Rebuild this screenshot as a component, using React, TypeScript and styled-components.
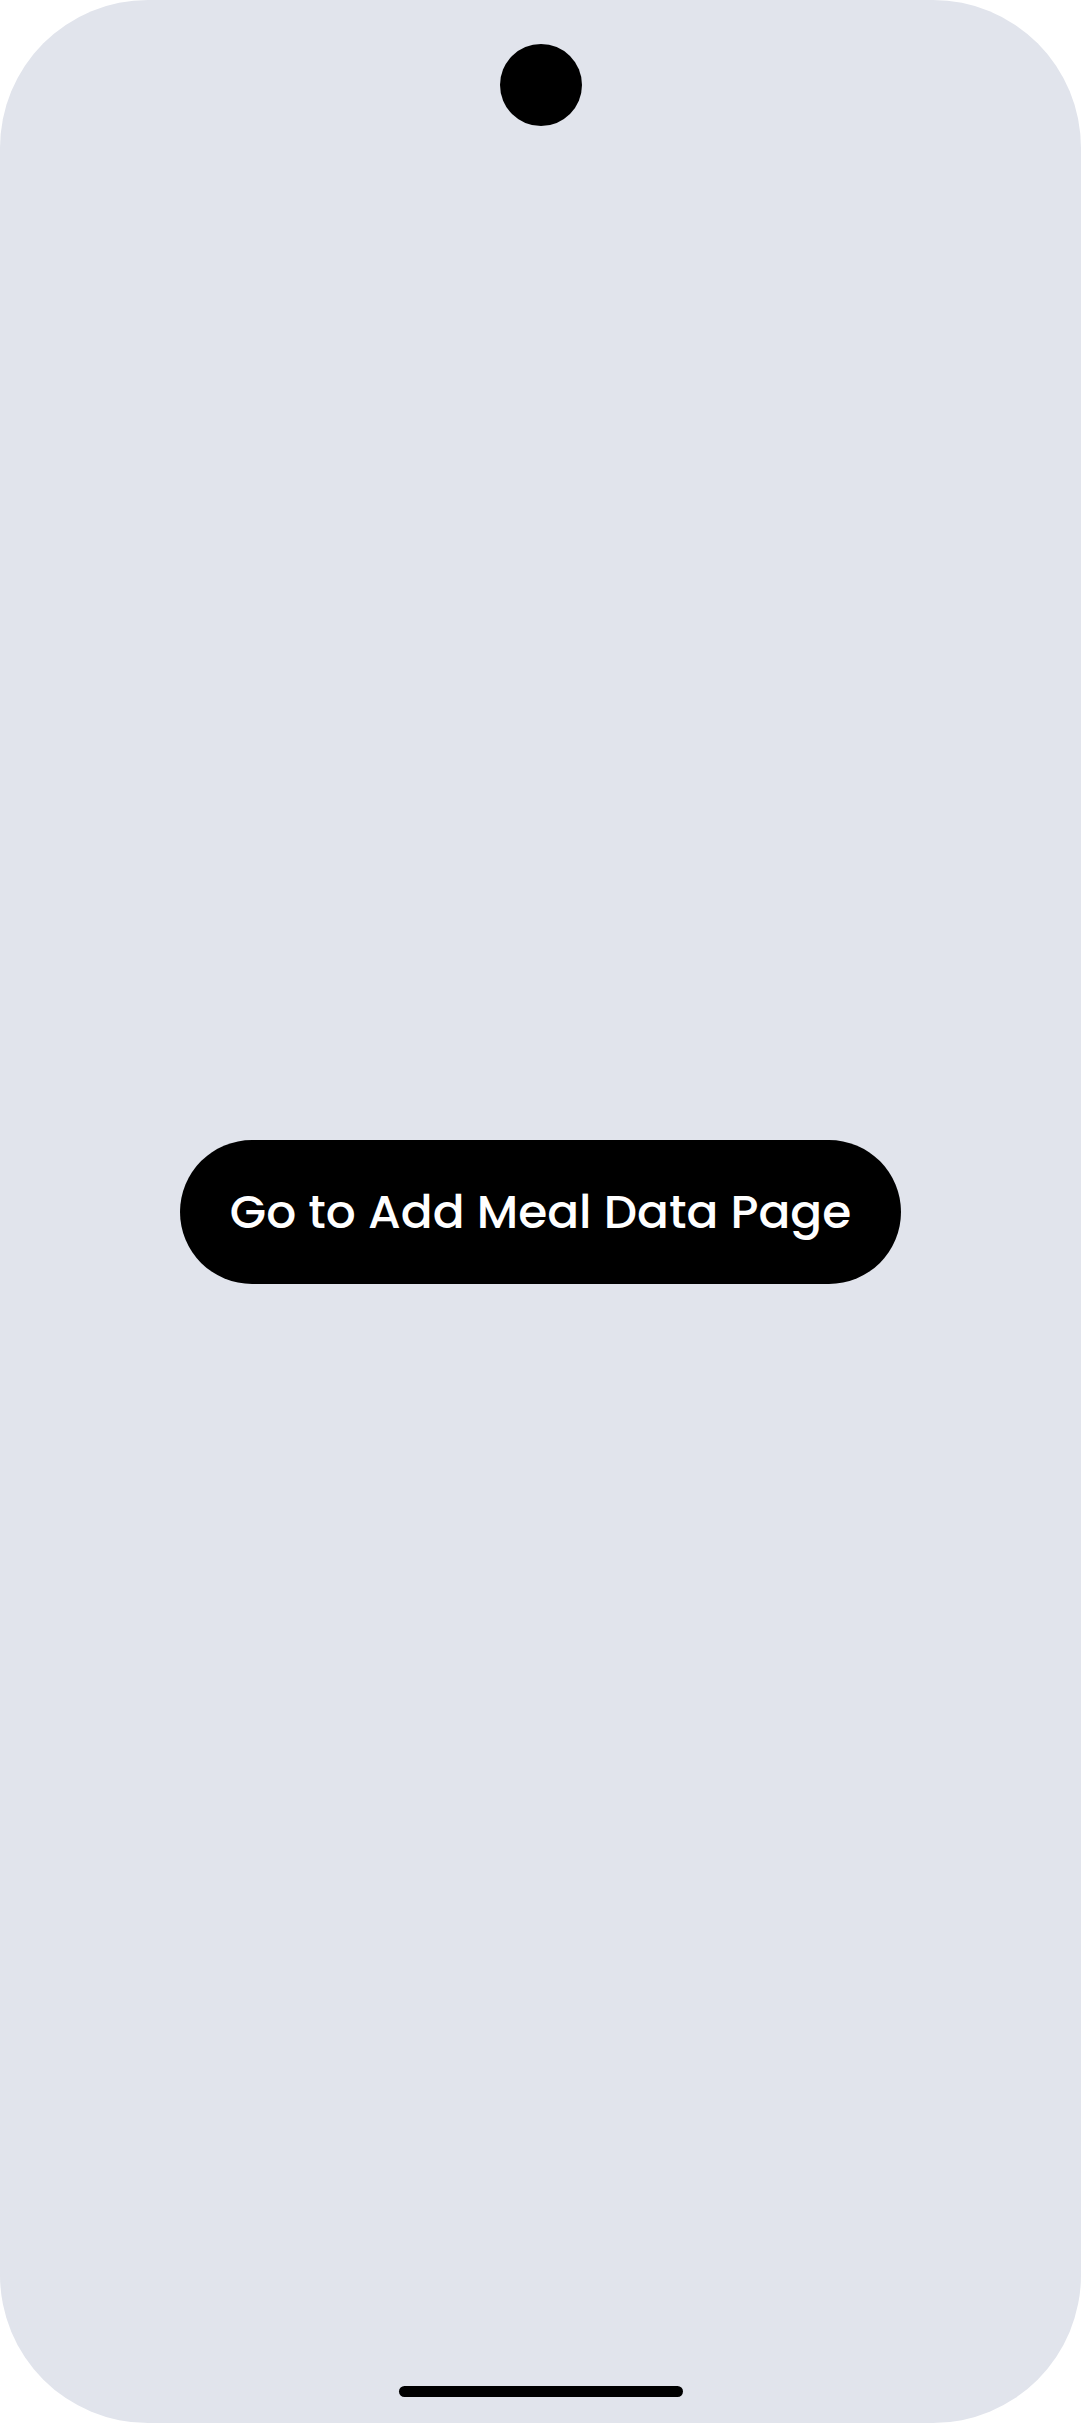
import React from 'react'
import styled, { createGlobalStyle } from 'styled-components'

const GlobalStyle = createGlobalStyle`
    html, body {
        margin: 0;
        padding: 0;
        background: #ffffff;
    }
`

const Frame = styled.div`
    width: 1081px;
    height: 2423px;
    border-radius: 148px;
    background: #e1e4ec;
    display: grid;
    grid-template-rows: 1fr auto 1fr;
    justify-items: center;
    overflow: hidden;
`

const Camera = styled.div`
    align-self: start;
    margin-top: 44px;
    width: 82px;
    height: 82px;
    border-radius: 50%;
    background: #000;
`

const HomeIndicator = styled.div`
    align-self: end;
    margin-bottom: 26px;
    width: 284px;
    height: 11px;
    border-radius: 6px;
    background: #000;
`

const PrimaryButton = styled.button`
    width: 721px;
    height: 144px;
    border: none;
    border-radius: 72px;
    background: #000;
    color: #fff;
    font-family: 'Poppins', 'Open Sans', sans-serif;
    font-size: 47px;
    font-weight: 500;
    cursor: pointer;
    display: flex;
    align-items: center;
    justify-content: center;
    padding: 0;

    :focus {
        outline: none;
    }
`

export default function App() {
    return (
        <>
            <GlobalStyle />
            <Frame>
                <Camera />
                <PrimaryButton>Go to Add Meal Data Page</PrimaryButton>
                <HomeIndicator />
            </Frame>
        </>
    )
}
